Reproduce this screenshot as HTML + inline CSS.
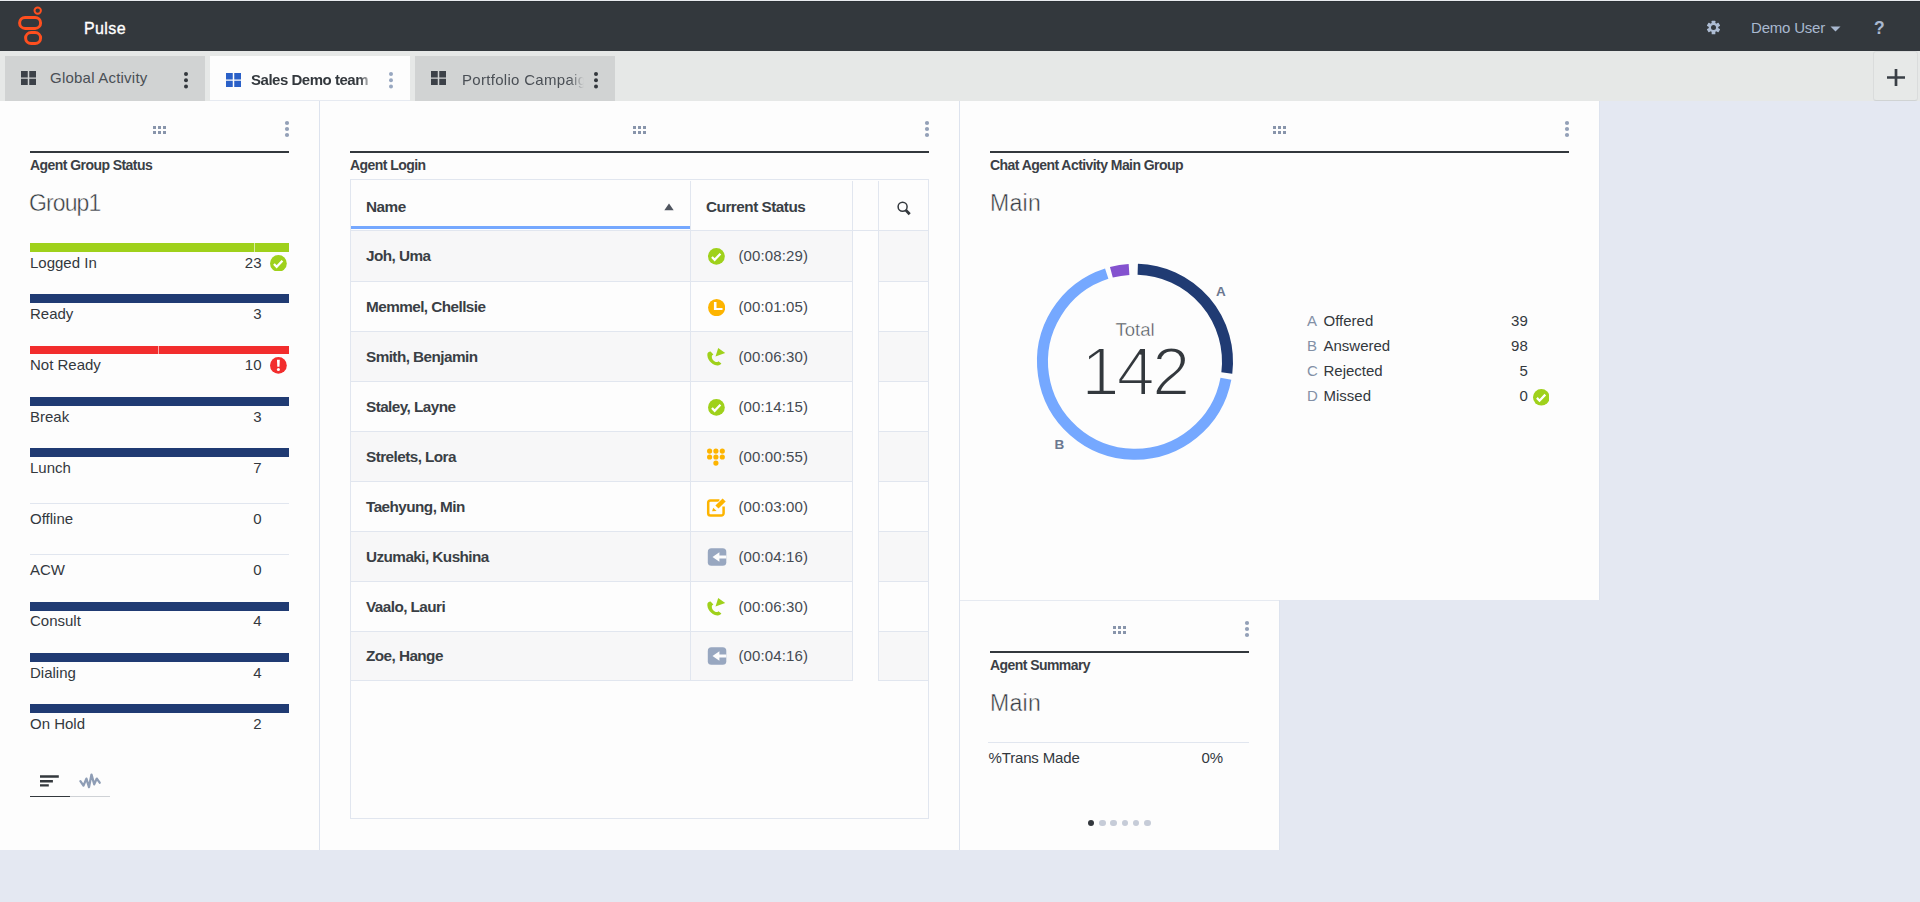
<!DOCTYPE html>
<html lang="en">
<head>
<meta charset="utf-8">
<title>Pulse</title>
<style>
*{box-sizing:border-box;margin:0;padding:0}
html,body{width:1920px;height:902px;overflow:hidden}
body{background:#e4e8f2;font-family:"Liberation Sans",sans-serif;color:#33383d;font-size:15px;position:relative}
.abs{position:absolute}
#top{position:absolute;left:0;top:0;width:1920px;height:51px;background:#33383d;border-top:1px solid #e9ebef;box-shadow:inset 0 1px 0 #2c3136}
#tabbar{position:absolute;left:0;top:51px;width:1920px;height:50px;background:#e6e8e7;z-index:5}
.tab{position:absolute;top:5px;height:45px;width:200px;background:#d1d3d3;color:#4a4f55;font-size:15px}
.tab.on{background:#fdfdfd;border-bottom:1px solid #e6eaf1;font-weight:bold;color:#33383d}
.tab .lbl{position:absolute;white-space:nowrap;overflow:hidden}
.w{position:absolute;background:#fdfdfd;box-shadow:inset -1px 0 0 #dde3ee,inset 0 1px 0 #e6eaf1}
.hl{position:absolute;height:2px;background:#33383d}
.ttl{position:absolute;font-weight:bold;font-size:14px;line-height:16px;white-space:nowrap;color:#3b4046}
.big{position:absolute;font-size:23px;line-height:30px;white-space:nowrap;color:#353a40;-webkit-text-stroke:0.45px #fdfdfd}
.row{position:absolute;left:30px;width:259px;height:40px}
.bar{position:absolute;left:0;top:0;width:259px;height:9px;background:#203b73}
.row .l{position:absolute;left:0;top:10.8px;font-size:15px;white-space:nowrap;line-height:18px}
.row .v{position:absolute;right:27.5px;top:10.8px;font-size:15px;white-space:nowrap;line-height:18px}
.thin{position:absolute;left:0;top:3.8px;width:259px;height:1px;background:#e1e6ef}
.tbl{position:absolute;border:1px solid #e1e6ef}
.th{position:absolute;font-weight:bold;font-size:15.3px;line-height:18px;white-space:nowrap;color:#3a3f45;letter-spacing:-0.5px}
.tr{position:absolute;left:0;width:577px}
.tr>div{position:absolute;top:0;height:100%;border-bottom:1px solid #e1e6ef}
.tr .c1{left:0;width:340px;border-right:1px solid #e1e6ef}
.tr .c2{left:340px;width:162px;border-right:1px solid #e1e6ef}
.tr .c3{left:527px;width:50px;border-left:1px solid #e1e6ef}
.tr.odd>div{background:#f7f7f8}
.tr .n{position:absolute;left:15px;font-weight:bold;font-size:15.3px;line-height:18px;white-space:nowrap;color:#3a3f45;letter-spacing:-0.56px}
.tr .t{position:absolute;left:47.5px;font-size:15px;line-height:18px;white-space:nowrap;color:#444a52;letter-spacing:0.12px}
.lg{position:absolute;left:347px;width:220.8px;height:18px;font-size:15px;line-height:18px;white-space:nowrap}
.lg i{font-style:normal;color:#8290a6;position:absolute;left:0;top:0}
.lg b{font-weight:normal;position:absolute;left:16.5px;top:0}
.lg u{text-decoration:none;position:absolute;right:0;top:0}
.tot{font-size:18.5px;line-height:20px;text-align:center;color:#4a4f55;-webkit-text-stroke:0.4px #fdfdfd}
.num{font-size:68px;line-height:76px;text-align:center;color:#33383d;letter-spacing:-2.5px;-webkit-text-stroke:2px #fdfdfd}
</style>
</head>
<body>
<div id="top">
<svg class="abs" style="left:14px;top:2px" width="34" height="46" viewBox="14 3 34 46">
<circle cx="37.7" cy="10.6" r="3.2" fill="none" stroke="#ff4f1f" stroke-width="2"/>
<rect x="19.6" y="17.4" width="21" height="11" rx="5.5" ry="5.5" fill="none" stroke="#ff4f1f" stroke-width="3"/>
<rect x="25.6" y="32.6" width="15" height="11" rx="5.5" ry="5.5" fill="none" stroke="#ff4f1f" stroke-width="3"/>
</svg>
<div class="abs" style="left:84px;top:18px;font-size:16px;line-height:20px;color:#fff;letter-spacing:0.4px;-webkit-text-stroke:0.35px #fff">Pulse</div>
<svg class="abs" style="left:1705.950px;top:18.950px" width="15" height="15" viewBox="-7.500 -7.500 15 15">
<g fill="#adbcd3"><circle r="4.700"/>
<rect x="-1.850" y="-6.700" width="3.700" height="13.400" rx="0.500"/>
<rect x="-1.850" y="-6.700" width="3.700" height="13.400" rx="0.500" transform="rotate(60)"/>
<rect x="-1.850" y="-6.700" width="3.700" height="13.400" rx="0.500" transform="rotate(120)"/></g>
<circle r="2.500" fill="#33383d"/>
</svg>
<div class="abs" style="left:1751px;top:17px;font-size:15px;line-height:20px;color:#a9b8d0;white-space:nowrap;letter-spacing:-0.2px">Demo User</div>
<svg class="abs" style="left:1830px;top:25px" width="11" height="6" viewBox="0 0 11 6"><path d="M0.5 0.5h10l-5 5z" fill="#a9b8d0"/></svg>
<div class="abs" style="left:1874px;top:17px;font-size:17.500px;line-height:20px;color:#a9b8d0;font-weight:bold">?</div>
</div>
<div id="tabbar">
<div class="tab" style="left:5px"><svg class="abs" style="left:16px;top:15px" width="15" height="14.200" viewBox="0 0 14 14" preserveAspectRatio="none"><path d="M0 0h6.300v6.300H0zM7.700 0h6.300v6.300H7.700zM0 7.700h6.300v6.300H0zM7.700 7.700h6.300v6.300H7.700z" fill="#3c4148"/></svg><div class="lbl" style="left:45px;top:12px;line-height:20px;letter-spacing:0.22px">Global Activity</div><svg class="abs" style="left:178px;top:14.7px" width="6" height="18.6" viewBox="-3 -9.3 6 18.6"><circle cy="-6.3" r="2" fill="#33383d"/><circle r="2" fill="#33383d"/><circle cy="6.3" r="2" fill="#33383d"/></svg></div>
<div class="tab on" style="left:210px"><svg class="abs" style="left:16px;top:17px" width="15" height="14.200" viewBox="0 0 14 14" preserveAspectRatio="none"><path d="M0 0h6.300v6.300H0zM7.700 0h6.300v6.300H7.700zM0 7.700h6.300v6.300H0zM7.700 7.700h6.300v6.300H7.700z" fill="#2a60c8"/></svg><div class="lbl" style="left:41px;top:14px;line-height:20px;width:119px;letter-spacing:-0.48px;-webkit-mask-image:linear-gradient(90deg,#000 91%,rgba(0,0,0,.25));mask-image:linear-gradient(90deg,#000 91%,rgba(0,0,0,.25))">Sales Demo team</div><svg class="abs" style="left:178px;top:14.7px" width="6" height="18.6" viewBox="-3 -9.3 6 18.6"><circle cy="-6.3" r="2" fill="#98a7c0"/><circle r="2" fill="#98a7c0"/><circle cy="6.3" r="2" fill="#98a7c0"/></svg></div>
<div class="tab" style="left:415px"><svg class="abs" style="left:16px;top:15px" width="15" height="14.200" viewBox="0 0 14 14" preserveAspectRatio="none"><path d="M0 0h6.300v6.300H0zM7.700 0h6.300v6.300H7.700zM0 7.700h6.300v6.300H0zM7.700 7.700h6.300v6.300H7.700z" fill="#3c4148"/></svg><div class="lbl" style="left:47px;top:13.600px;line-height:20px;width:122px;letter-spacing:0.3px;-webkit-mask-image:linear-gradient(90deg,#000 88%,transparent);mask-image:linear-gradient(90deg,#000 88%,transparent)">Portfolio Campaign</div><svg class="abs" style="left:178px;top:14.7px" width="6" height="18.6" viewBox="-3 -9.3 6 18.6"><circle cy="-6.3" r="2" fill="#33383d"/><circle r="2" fill="#33383d"/><circle cy="6.3" r="2" fill="#33383d"/></svg></div>
<div class="abs" style="left:1873px;top:0;width:45px;height:50px;background:#e7e9e8;border:1px solid #dadcdc;border-bottom-color:#d0d3d3;border-radius:3px"></div>
<svg class="abs" style="left:1886.500px;top:18px" width="18" height="17" viewBox="0 0 18 17"><path d="M0 8.500h18M9 0v17" stroke="#3a3f46" stroke-width="2.700" fill="none"/></svg>
</div>
<div class="w" id="w1" style="left:0;top:100px;width:320px;height:750px"><svg class="abs" style="left:153.0px;top:26px" width="13" height="8" viewBox="0 0 13 8"><path d="M0 0h3v3h-3zM0 5h3v3h-3zM5 0h3v3h-3zM5 5h3v3h-3zM10 0h3v3h-3zM10 5h3v3h-3z" fill="#8895ab"/></svg><svg class="abs" style="left:284px;top:20px" width="6" height="18" viewBox="-3 -9 6 18"><circle cy="-6" r="2.1" fill="#93a0b7"/><circle r="2.1" fill="#93a0b7"/><circle cy="6" r="2.1" fill="#93a0b7"/></svg><div class="hl" style="left:30px;top:51px;width:259px"></div><div class="ttl" style="left:30px;top:57px;letter-spacing:-0.56px">Agent Group Status</div><div class="big" style="left:29px;top:87.500px;letter-spacing:-0.9px">Group1</div><div class="row" style="top:143.2px"><div class="bar" style="background:#9fd11b"></div><div class="abs" style="left:224px;top:0;width:1px;height:9px;background:rgba(255,255,255,.6)"></div><div class="l">Logged In</div><div class="v">23</div><svg class="abs" style="left:240.1px;top:11.4px" width="16.8" height="16.8" viewBox="-10 -10 20 20"><circle r="10" fill="#9fd11b"/><path d="M-5.300 0.700L-2.100 4.100L4.800 -3.200" fill="none" stroke="#fff" stroke-width="2.700"/></svg></div><div class="row" style="top:194.4px"><div class="bar" style="background:#203b73"></div><div class="l">Ready</div><div class="v">3</div></div><div class="row" style="top:245.6px"><div class="bar" style="background:#f22d2d;height:8.400px"></div><div class="abs" style="left:128px;top:0;width:1px;height:9px;background:rgba(255,255,255,.6)"></div><div class="l">Not Ready</div><div class="v">10</div><svg class="abs" style="left:240.1px;top:11.4px" width="16.8" height="16.8" viewBox="-10 -10 20 20"><circle r="10" fill="#f22d2d"/><path d="M-1.700 -6.600h3.400l-0.400 8.200h-2.600z" fill="#fff"/><circle cy="4.900" r="1.800" fill="#fff"/></svg></div><div class="row" style="top:296.8px"><div class="bar" style="background:#203b73"></div><div class="l">Break</div><div class="v">3</div></div><div class="row" style="top:348.0px"><div class="bar" style="background:#203b73"></div><div class="l">Lunch</div><div class="v">7</div></div><div class="row" style="top:399.2px"><div class="thin"></div><div class="l">Offline</div><div class="v">0</div></div><div class="row" style="top:450.4px"><div class="thin"></div><div class="l">ACW</div><div class="v">0</div></div><div class="row" style="top:501.6px"><div class="bar" style="background:#203b73"></div><div class="l">Consult</div><div class="v">4</div></div><div class="row" style="top:552.8px"><div class="bar" style="background:#203b73"></div><div class="l">Dialing</div><div class="v">4</div></div><div class="row" style="top:604.0px"><div class="bar" style="background:#203b73"></div><div class="l">On Hold</div><div class="v">2</div></div><svg class="abs" style="left:40px;top:675px" width="20" height="13" viewBox="0 0 20 13"><path d="M0 0.200h18.800v2.600H0zM0 5.100h12.900v2.500H0zM0 9.300h8.800v2.300H0z" fill="#33383d"/></svg>
<svg class="abs" style="left:78px;top:672px" width="24" height="18" viewBox="78 672 24 18"><path d="M80.400 681.100L83.500 685.600L86.400 678.600L89 687.100L91.500 674.600L94.200 684.300L96.800 678.600L99.700 682.700" fill="none" stroke="#8e9db5" stroke-width="2.300" stroke-linejoin="round" stroke-linecap="round"/></svg>
<div class="abs" style="left:30px;top:696px;width:40px;height:1px;background:#33383d"></div>
<div class="abs" style="left:70px;top:696px;width:40px;height:1px;background:#cfd2d6"></div></div>
<div class="w" id="w2" style="left:320px;top:100px;width:640px;height:750px"><svg class="abs" style="left:313.0px;top:26px" width="13" height="8" viewBox="0 0 13 8"><path d="M0 0h3v3h-3zM0 5h3v3h-3zM5 0h3v3h-3zM5 5h3v3h-3zM10 0h3v3h-3zM10 5h3v3h-3z" fill="#8895ab"/></svg><svg class="abs" style="left:604px;top:20px" width="6" height="18" viewBox="-3 -9 6 18"><circle cy="-6" r="2.1" fill="#93a0b7"/><circle r="2.1" fill="#93a0b7"/><circle cy="6" r="2.1" fill="#93a0b7"/></svg><div class="hl" style="left:30px;top:51px;width:579px"></div><div class="ttl" style="left:30px;top:57px;letter-spacing:-0.56px">Agent Login</div><div class="tbl" style="left:30px;top:79px;width:579px;height:640px"><div class="abs" style="left:339px;top:1px;width:1px;height:49px;background:#e1e6ef"></div><div class="abs" style="left:501px;top:1px;width:1px;height:49px;background:#e1e6ef"></div><div class="abs" style="left:527px;top:1px;width:1px;height:49px;background:#e1e6ef"></div><div class="abs" style="left:0;top:50px;width:577px;height:1px;background:#e1e6ef"></div><div class="abs" style="left:0;top:46px;width:339px;height:3px;background:#75a8ff"></div><div class="th" style="left:15px;top:18px">Name</div><div class="th" style="left:355px;top:18px">Current Status</div><svg class="abs" style="left:313px;top:23px" width="10" height="8" viewBox="0 0 10 8"><path d="M0.300 7.300L5 0.500L9.700 7.300z" fill="#4f555f"/></svg><svg class="abs" style="left:545px;top:20.600px" width="16" height="16" viewBox="0 0 16 16"><circle cx="6.600" cy="5.800" r="4.500" fill="none" stroke="#33383d" stroke-width="1.500"/><path d="M9.700 9L13.700 13.200" stroke="#33383d" stroke-width="2.800"/></svg><div class="tr odd" style="top:51px;height:51px"><div class="c1"><div class="n" style="top:15.5px">Joh, Uma</div></div><div class="c2"><svg class="abs" style="left:17.0px;top:16.9px" width="16.8" height="16.8" viewBox="-10 -10 20 20"><circle r="10" fill="#9fd11b"/><path d="M-5.300 0.700L-2.100 4.100L4.800 -3.200" fill="none" stroke="#fff" stroke-width="2.700"/></svg><div class="t" style="top:15.5px">(00:08:29)</div></div><div class="c3"></div></div><div class="tr" style="top:102px;height:50px"><div class="c1"><div class="n" style="top:15.5px">Memmel, Chellsie</div></div><div class="c2"><svg class="abs" style="left:16.8px;top:16.7px" width="17.2" height="17.2" viewBox="-10 -10 20 20"><circle r="10" fill="#fdb400"/><path d="M-3.100 -6.600h3v7h7v2.400h-10z" fill="#fff"/></svg><div class="t" style="top:15.5px">(00:01:05)</div></div><div class="c3"></div></div><div class="tr odd" style="top:152px;height:50px"><div class="c1"><div class="n" style="top:15.5px">Smith, Benjamin</div></div><div class="c2"><svg class="abs" style="left:15.4px;top:15.0px" width="20" height="20" viewBox="-10 -10 20 20"><path d="M-8.600 -3.200C-9.200 1.500 -5.500 7.600 1.400 8.500C3.200 8.700 4.600 7.700 5.400 6.600L2.400 4.200C1.500 5.100 0.300 5.300 -0.800 4.700C-3 3.600 -4.300 1.400 -4.200 -0.600C-4.100 -1.500 -3.600 -2 -2.600 -2.500L-5.400 -5.600C-7.300 -5.400 -8.400 -4.600 -8.600 -3.200Z" fill="#9fd11b"/><path d="M2.200 -9L9.200 -3.900L-0.500 -0.500z" fill="#9fd11b"/></svg><div class="t" style="top:15.5px">(00:06:30)</div></div><div class="c3"></div></div><div class="tr" style="top:202px;height:50px"><div class="c1"><div class="n" style="top:15.5px">Staley, Layne</div></div><div class="c2"><svg class="abs" style="left:17.0px;top:16.9px" width="16.8" height="16.8" viewBox="-10 -10 20 20"><circle r="10" fill="#9fd11b"/><path d="M-5.300 0.700L-2.100 4.100L4.800 -3.200" fill="none" stroke="#fff" stroke-width="2.700"/></svg><div class="t" style="top:15.5px">(00:14:15)</div></div><div class="c3"></div></div><div class="tr odd" style="top:252px;height:50px"><div class="c1"><div class="n" style="top:15.5px">Strelets, Lora</div></div><div class="c2"><svg class="abs" style="left:15.4px;top:15.4px" width="20" height="20" viewBox="-10 -10 20 20"><g fill="#fdb400"><circle cx="-6.4" cy="-5.9" r="2.600"/><circle cx="-6.4" cy="0" r="2.600"/><circle cx="-0.1" cy="-5.9" r="2.600"/><circle cx="-0.1" cy="0" r="2.600"/><circle cx="6.3" cy="-5.9" r="2.600"/><circle cx="6.3" cy="0" r="2.600"/><circle cx="-0.100" cy="6.100" r="2.600"/></g></svg><div class="t" style="top:15.5px">(00:00:55)</div></div><div class="c3"></div></div><div class="tr" style="top:302px;height:50px"><div class="c1"><div class="n" style="top:15.5px">Taehyung, Min</div></div><div class="c2"><svg class="abs" style="left:14.4px;top:14.7px" width="22" height="22" viewBox="-11 -11 22 22"><path d="M3.500 -7.500H-5.500A2.300 2.300 0 0 0 -7.800 -5.200V5.200A2.300 2.300 0 0 0 -5.500 7.500H5.300A2.300 2.300 0 0 0 7.600 5.200V-1.500" fill="none" stroke="#fdb400" stroke-width="2.500"/><path d="M6.600 -9.600L9.700 -6.500L2.500 0.600L-0.600 -2.500Z" fill="#fdb400" stroke="#fdfdfd" stroke-width="1.400" paint-order="stroke"/><path d="M-2.800 -0.300L0.600 3.100L-3.900 3.300Z" fill="#fdb400"/></svg><div class="t" style="top:15.5px">(00:03:00)</div></div><div class="c3"></div></div><div class="tr odd" style="top:352px;height:50px"><div class="c1"><div class="n" style="top:15.5px">Uzumaki, Kushina</div></div><div class="c2"><svg class="abs" style="left:15.8px;top:15.2px" width="20" height="20" viewBox="-10 -10 20 20"><rect x="-9.200" y="-8.700" width="18.500" height="17.500" rx="3.600" fill="#98a7c0"/><path d="M-4.500 0L2.400 -4.700V-1.400H9.300V1.500H2.400V4.700Z" fill="#fdfdfd"/></svg><div class="t" style="top:15.5px">(00:04:16)</div></div><div class="c3"></div></div><div class="tr" style="top:402px;height:50px"><div class="c1"><div class="n" style="top:15.5px">Vaalo, Lauri</div></div><div class="c2"><svg class="abs" style="left:15.4px;top:15.0px" width="20" height="20" viewBox="-10 -10 20 20"><path d="M-8.600 -3.200C-9.200 1.500 -5.500 7.600 1.400 8.500C3.200 8.700 4.600 7.700 5.400 6.600L2.400 4.200C1.500 5.100 0.300 5.300 -0.800 4.700C-3 3.600 -4.300 1.400 -4.200 -0.600C-4.100 -1.500 -3.600 -2 -2.600 -2.500L-5.400 -5.600C-7.300 -5.400 -8.400 -4.600 -8.600 -3.200Z" fill="#9fd11b"/><path d="M2.200 -9L9.200 -3.900L-0.500 -0.500z" fill="#9fd11b"/></svg><div class="t" style="top:15.5px">(00:06:30)</div></div><div class="c3"></div></div><div class="tr odd" style="top:452px;height:49px"><div class="c1"><div class="n" style="top:14.5px">Zoe, Hange</div></div><div class="c2"><svg class="abs" style="left:15.8px;top:14.4px" width="20" height="20" viewBox="-10 -10 20 20"><rect x="-9.200" y="-8.700" width="18.500" height="17.500" rx="3.600" fill="#98a7c0"/><path d="M-4.500 0L2.400 -4.700V-1.400H9.300V1.500H2.400V4.700Z" fill="#fdfdfd"/></svg><div class="t" style="top:14.5px">(00:04:16)</div></div><div class="c3"></div></div></div></div>
<div class="w" id="w3" style="left:960px;top:100px;width:640px;height:500px"><svg class="abs" style="left:313.0px;top:26px" width="13" height="8" viewBox="0 0 13 8"><path d="M0 0h3v3h-3zM0 5h3v3h-3zM5 0h3v3h-3zM5 5h3v3h-3zM10 0h3v3h-3zM10 5h3v3h-3z" fill="#8895ab"/></svg><svg class="abs" style="left:604px;top:20px" width="6" height="18" viewBox="-3 -9 6 18"><circle cy="-6" r="2.1" fill="#93a0b7"/><circle r="2.1" fill="#93a0b7"/><circle cy="6" r="2.1" fill="#93a0b7"/></svg><div class="hl" style="left:30px;top:51px;width:579px"></div><div class="ttl" style="left:30px;top:57px;letter-spacing:-0.56px">Chat Agent Activity Main Group</div><div class="big" style="left:30px;top:87.500px;letter-spacing:0.3px">Main</div><svg class="abs" style="left:0;top:100px" width="360" height="300" viewBox="0 0 360 300"><path d="M177.74 69.24A92.5 92.5 0 0 1 266.81 172.97" fill="none" stroke="#203b73" stroke-width="11"/><path d="M265.92 178.72A92.5 92.5 0 1 1 146.72 73.63" fill="none" stroke="#75a8ff" stroke-width="11"/><path d="M151.37 72.27A92.5 92.5 0 0 1 169.03 69.39" fill="none" stroke="#8452cf" stroke-width="11"/><text x="260.8" y="96.200" text-anchor="middle" font-family="Liberation Sans, sans-serif" font-weight="bold" font-size="13.5" fill="#6b7890">A</text><text x="99.400" y="249.200" text-anchor="middle" font-family="Liberation Sans, sans-serif" font-weight="bold" font-size="13.5" fill="#6b7890">B</text></svg><div class="abs tot" style="left:75px;width:200px;top:220px">Total</div><div class="abs num" style="left:74.500px;width:200px;top:232.500px">142</div><div class="lg" style="top:212.1px"><i>A</i><b>Offered</b><u>39</u></div><div class="lg" style="top:237.1px"><i>B</i><b>Answered</b><u>98</u></div><div class="lg" style="top:262.1px"><i>C</i><b>Rejected</b><u>5</u></div><div class="lg" style="top:287.1px"><i>D</i><b>Missed</b><u>0</u></div><svg class="abs" style="left:572.7px;top:289.4px" width="16.6" height="16.6" viewBox="-10 -10 20 20"><circle r="10" fill="#9fd11b"/><path d="M-5.300 0.700L-2.100 4.100L4.800 -3.200" fill="none" stroke="#fff" stroke-width="2.700"/></svg></div>
<div class="w" id="w4" style="left:960px;top:600px;width:320px;height:250px"><svg class="abs" style="left:153.0px;top:26px" width="13" height="8" viewBox="0 0 13 8"><path d="M0 0h3v3h-3zM0 5h3v3h-3zM5 0h3v3h-3zM5 5h3v3h-3zM10 0h3v3h-3zM10 5h3v3h-3z" fill="#8895ab"/></svg><svg class="abs" style="left:284px;top:20px" width="6" height="18" viewBox="-3 -9 6 18"><circle cy="-6" r="2.1" fill="#93a0b7"/><circle r="2.1" fill="#93a0b7"/><circle cy="6" r="2.1" fill="#93a0b7"/></svg><div class="hl" style="left:30px;top:51px;width:259px"></div><div class="ttl" style="left:30px;top:57px;letter-spacing:-0.56px">Agent Summary</div><div class="big" style="left:30px;top:87.500px;letter-spacing:0.3px">Main</div><div class="abs" style="left:28px;top:142px;width:261px;height:1px;background:#e1e6ef"></div><div class="abs" style="left:28.500px;top:148.800px;font-size:15px;line-height:18px;white-space:nowrap;letter-spacing:-0.15px">%Trans Made</div><div class="abs" style="left:241.500px;top:148.800px;font-size:15px;line-height:18px;white-space:nowrap">0%</div><div class="abs" style="left:127.8px;top:219.6px;width:6.600px;height:6.600px;border-radius:50%;background:#33383d"></div><div class="abs" style="left:139.0px;top:219.6px;width:6.600px;height:6.600px;border-radius:50%;background:#c6ccd8"></div><div class="abs" style="left:150.29999999999998px;top:219.6px;width:6.600px;height:6.600px;border-radius:50%;background:#c6ccd8"></div><div class="abs" style="left:161.5px;top:219.6px;width:6.600px;height:6.600px;border-radius:50%;background:#c6ccd8"></div><div class="abs" style="left:172.79999999999998px;top:219.6px;width:6.600px;height:6.600px;border-radius:50%;background:#c6ccd8"></div><div class="abs" style="left:184.0px;top:219.6px;width:6.600px;height:6.600px;border-radius:50%;background:#c6ccd8"></div></div>
</body>
</html>
